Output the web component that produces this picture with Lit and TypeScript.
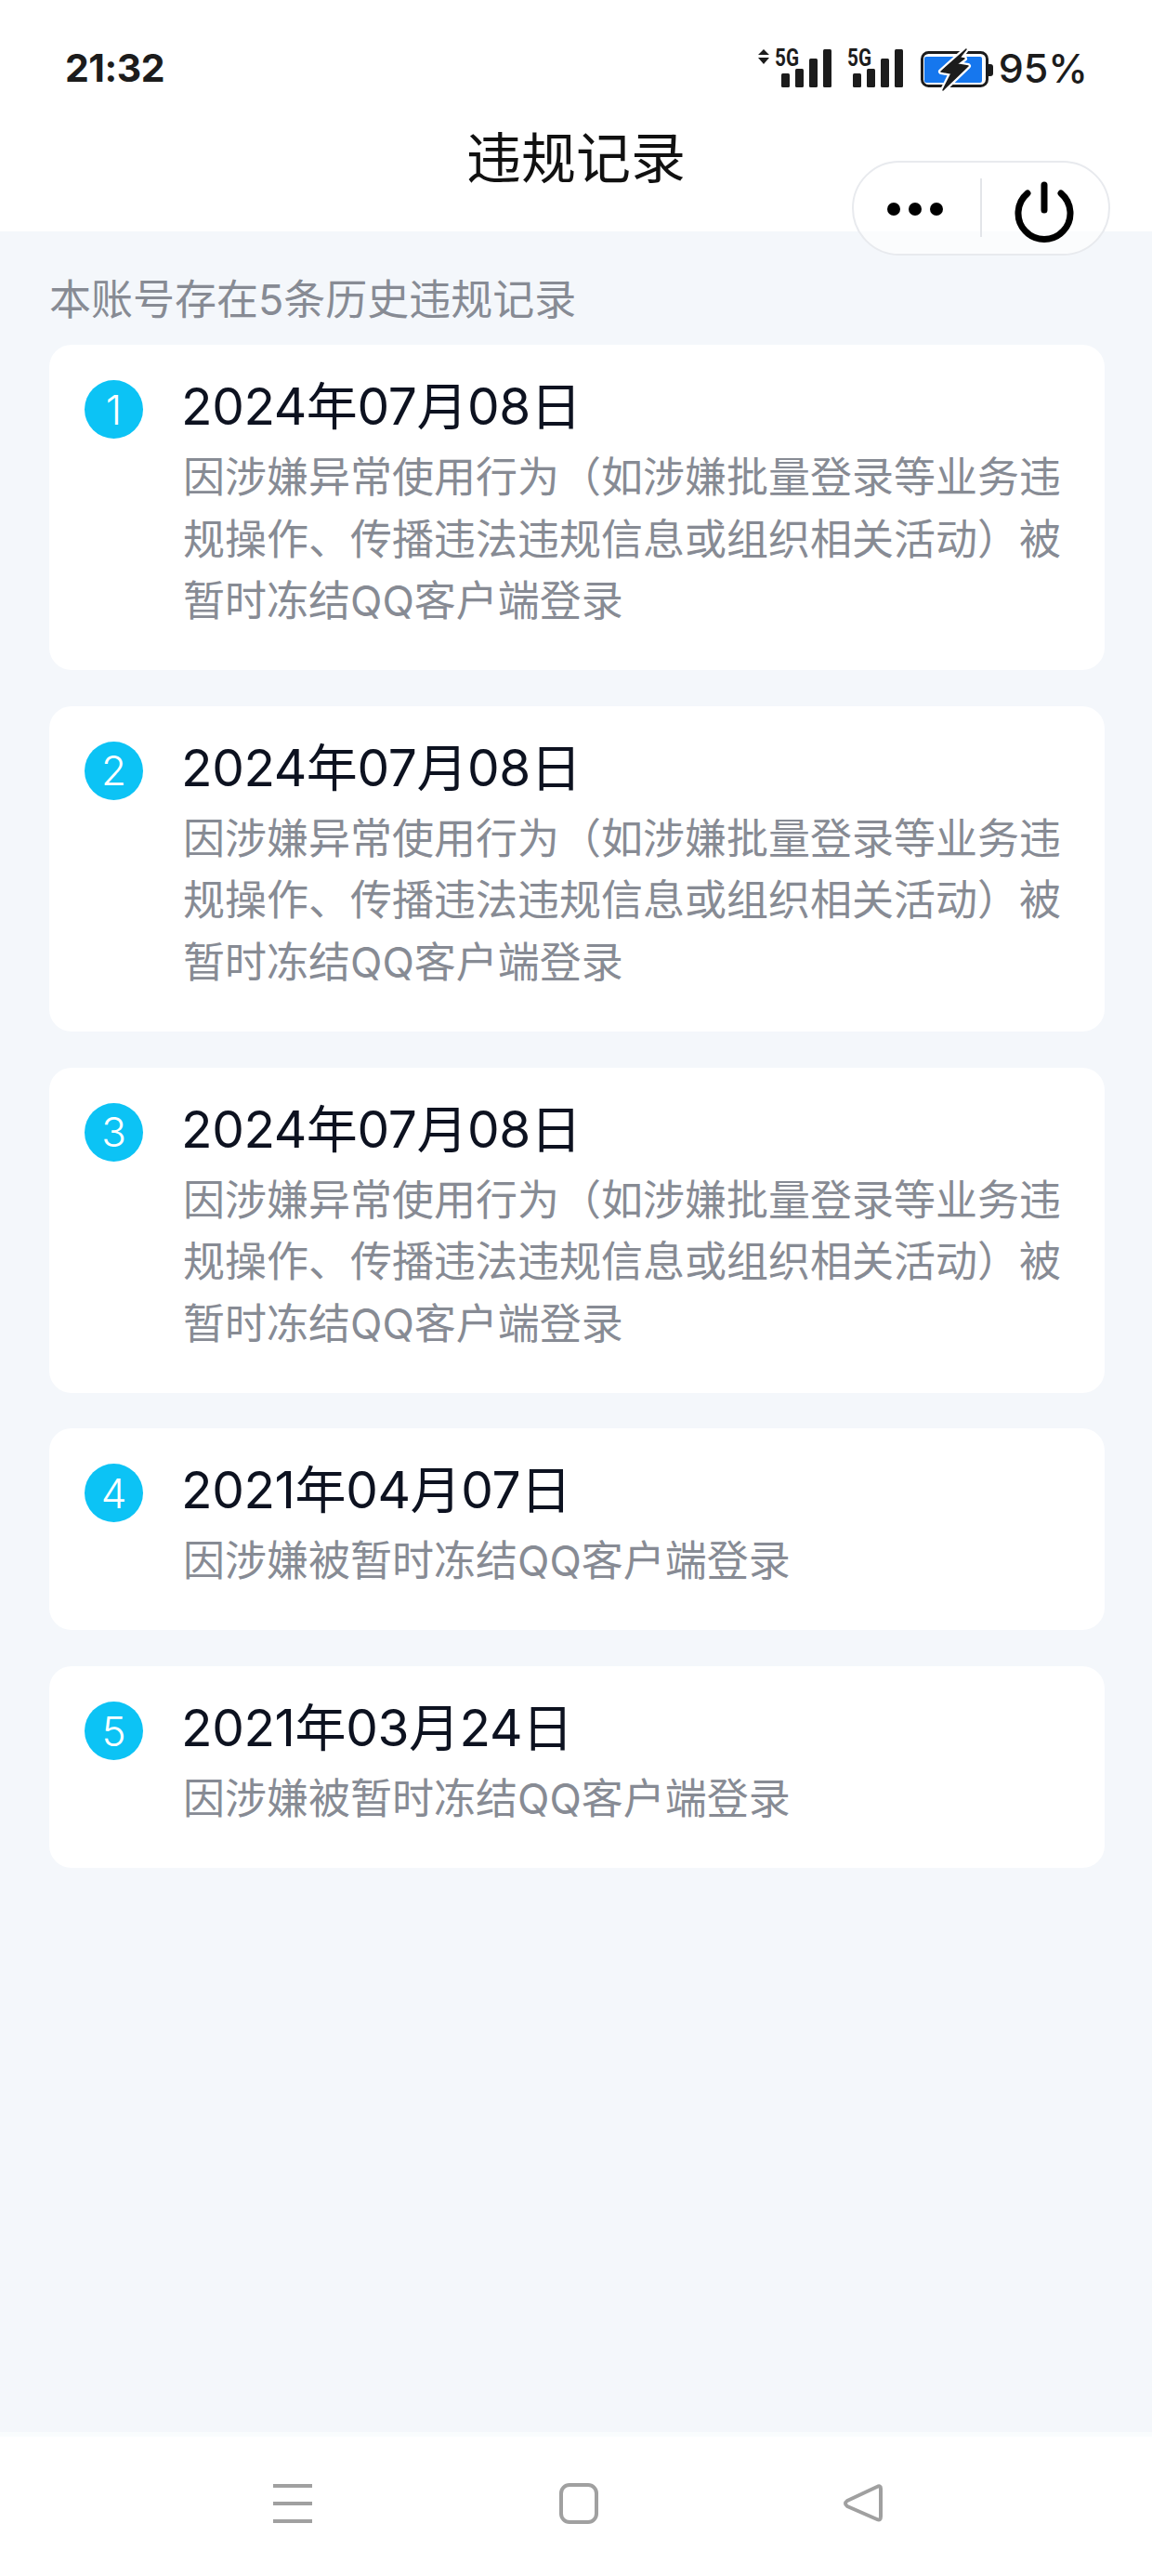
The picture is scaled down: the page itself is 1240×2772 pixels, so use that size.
import { LitElement, html, css, svg } from "lit";
import { customElement } from "lit/decorators.js";

const LONG = ["因涉嫌异常使用行为（如涉嫌批量登录等业务违", "规操作、传播违法违规信息或组织相关活动）被", "暂时冻结QQ客户端登录"];
const SHORT = ["因涉嫌被暂时冻结QQ客户端登录"];
const RECORDS = [
  { date: "2024年07月08日", lines: LONG },
  { date: "2024年07月08日", lines: LONG },
  { date: "2024年07月08日", lines: LONG },
  { date: "2021年04月07日", lines: SHORT },
  { date: "2021年03月24日", lines: SHORT },
];

const BOLT = "M226 0 L199 24 L210 26 L201 44 L228 18 L216 16 L224 10 L219 9 Z";

const bars = (x: number) => svg`
  <rect x="${x}" y="26" width="9" height="15" rx="1.5"/>
  <rect x="${x + 15}" y="21" width="9" height="20" rx="1.5"/>
  <rect x="${x + 30}" y="10" width="9" height="31" rx="1.5"/>
  <rect x="${x + 45}" y="0" width="9" height="41" rx="1.5"/>`;

@customElement("app-root")
export class AppRoot extends LitElement {
  static styles = css`
    :host { display: block; width: 1240px; height: 2772px; position: relative; overflow: hidden; font-family: Inter, "Noto Sans CJK SC", sans-serif; }
    .page { height: 2772px; display: flex; flex-direction: column; background: #f4f7fb; }
    .top { background: #fff; height: 249px; display: flex; flex-direction: column; flex: none; }
    .status { height: 120px; display: flex; align-items: flex-start; justify-content: space-between; padding: 47px 70px 0; box-sizing: border-box; color: #1c1c1c; }
    .time { font-size: 41px; font-weight: 700; line-height: 52px; letter-spacing: -0.5px; }
    .right { display: flex; align-items: flex-start; margin-right: -1px; }
    .right svg { display: block; margin-top: -4px; }
    .pct { font-size: 43px; font-weight: 500; line-height: 52px; margin-left: 6px; }
    .title { font-size: 59px; line-height: 80px; text-align: center; color: #111; font-family: "Noto Sans CJK SC", sans-serif; margin-top: 7px; width: 100%; }
    .capsule { position: absolute; left: 917px; top: 173px; width: 278px; height: 102px; box-sizing: border-box; border: 2px solid #e8eaee; border-radius: 51px; background: rgba(255,255,255,.6); }
    .capsule svg { display: block; position: absolute; left: -2px; top: -2px; }
    .main { flex: 1; padding: 44px 51px 0 53px; display: flex; flex-direction: column; }
    .note { font-size: 45px; line-height: 60px; color: #878b94; margin-bottom: 18px; }
    .list { display: flex; flex-direction: column; gap: 38.8px; }
    .card { background: #fff; border-radius: 24px; padding: 22px 38px 40.5px; display: grid; grid-template-columns: 63px 1fr; column-gap: 43px; }
    .badge { width: 63px; height: 63px; border-radius: 50%; background: #0cc3f5; color: #fff; display: flex; align-items: center; justify-content: center; font-size: 44px; font-weight: 350; margin-top: 16px; }
    .date { font-size: 55px; line-height: 88px; color: #0d1220; letter-spacing: -0.4px; margin-left: -2px; }
    .line { font-size: 45px; line-height: 66.5px; color: #878b94; white-space: nowrap; }
    .nav { height: 150px; flex: none; background: #fff; border-top: 5px solid #f9fcfd; }
    .nav svg { display: block; }
  `;

  render() {
    return html`
      <div class="page">
        <div class="top">
          <div class="status">
            <span class="time">21:32</span>
            <div class="right">
              <svg width="255" height="56" viewBox="0 -10 255 56" fill="#1c1c1c">
                <path d="M2 6 L8 0 L14 6 Z M2 9 L14 9 L8 16 Z"/>
                <text x="20" y="18" font-family="Roboto, sans-serif" font-weight="700" font-size="25" textLength="26" lengthAdjust="spacingAndGlyphs">5G</text>
                ${bars(27)}
                <text x="98" y="18" font-family="Roboto, sans-serif" font-weight="700" font-size="25" textLength="26" lengthAdjust="spacingAndGlyphs">5G</text>
                ${bars(104)}
                <rect x="178.5" y="3.5" width="70" height="36" rx="7" fill="none" stroke="#1c1c1c" stroke-width="3"/>
                <rect x="181" y="8" width="62" height="28" rx="2" fill="#1677ee"/>
                <path d="M250 16 h2 a3 3 0 0 1 3 3 v7 a3 3 0 0 1 -3 3 h-2 Z"/>
                <path d="${BOLT}" fill="#fff" stroke="#fff" stroke-width="6" stroke-linejoin="round"/>
                <path d="${BOLT}" stroke="#1c1c1c" stroke-width="1.5" stroke-linejoin="round"/>
              </svg>
              <span class="pct">95%</span>
            </div>
          </div>
          <div class="title">违规记录</div>
        </div>
        <div class="main">
          <div class="note">本账号存在5条历史违规记录</div>
          <div class="list">
            ${RECORDS.map((r, i) => html`
              <div class="card">
                <div class="badge">${i + 1}</div>
                <div>
                  <div class="date">${r.date}</div>
                  ${r.lines.map((l) => html`<div class="line">${l}</div>`)}
                </div>
              </div>`)}
          </div>
        </div>
        <div class="nav">
          <svg width="1240" height="150" viewBox="0 2623 1240 150" fill="none" stroke="#a0a0a0" stroke-width="4">
            <path d="M294 2676 H336 M294 2695 H336 M294 2714 H336"/>
            <rect x="604" y="2675" width="38" height="40" rx="9"/>
            <path d="M944 2677 Q948 2675 948 2679 V2709 Q948 2714 944 2712 L912 2698 Q908 2695 912 2692 Z" stroke-linejoin="round"/>
          </svg>
        </div>
      </div>
      <div class="capsule">
        <svg width="278" height="102" viewBox="917 173 278 102">
          <circle cx="962" cy="225" r="7" fill="#000"/>
          <circle cx="985" cy="225" r="7" fill="#000"/>
          <circle cx="1008" cy="225" r="7" fill="#000"/>
          <path d="M1056 192 V255" stroke="#e3e5e9" stroke-width="2"/>
          <path d="M1106 208 A28 28 0 1 0 1142 208 M1124 199 V226" fill="none" stroke="#000" stroke-width="7" stroke-linecap="round"/>
        </svg>
      </div>
    `;
  }
}
